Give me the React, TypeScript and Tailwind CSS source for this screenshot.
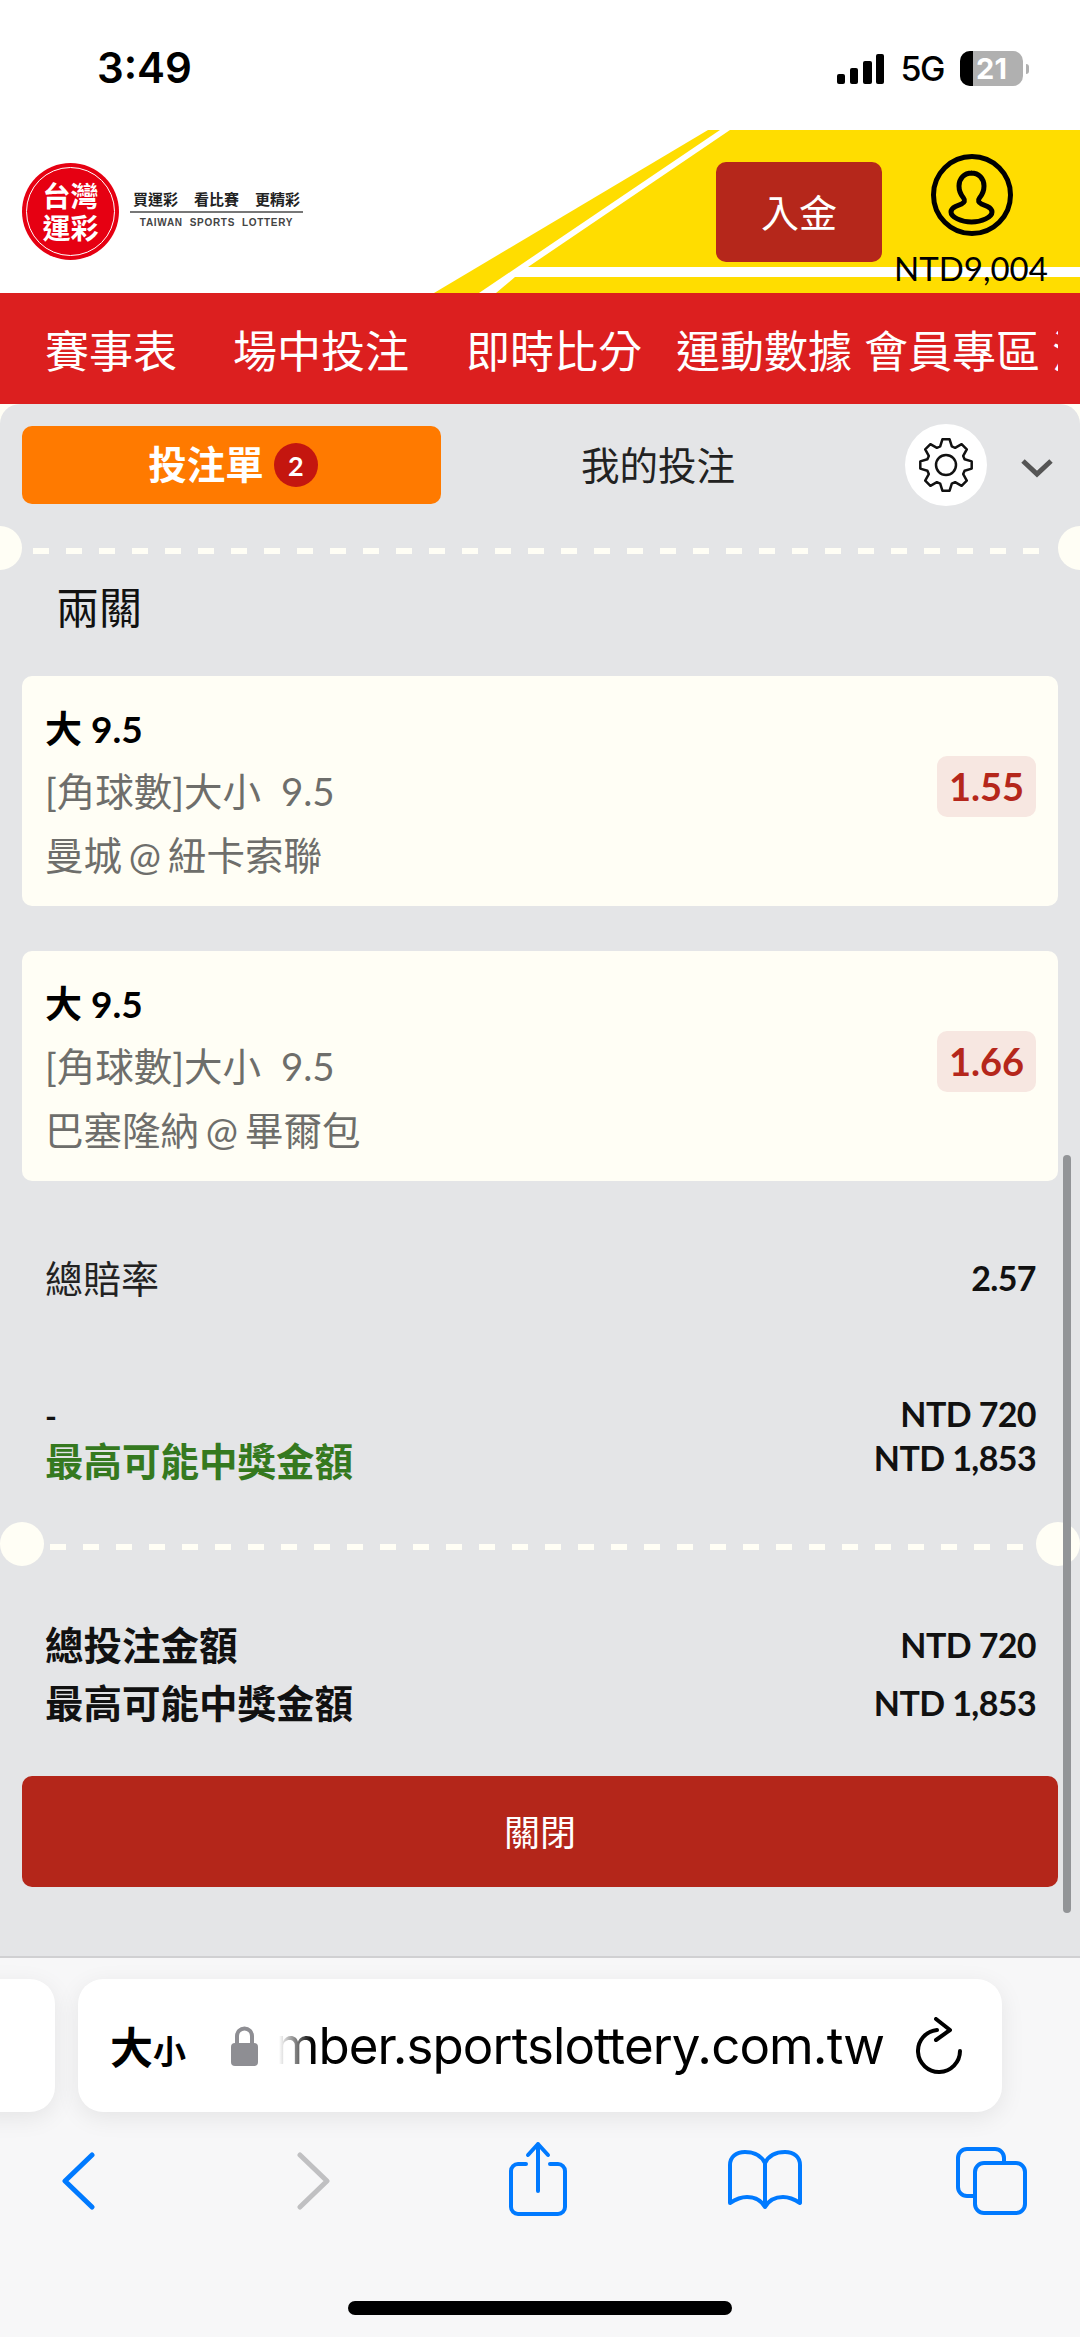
import React from 'react';

const cjk = "font-['Lato','Noto_Sans_CJK_TC',sans-serif]";

const gearPath = (() => {
  const cx = 28;
  const cy = 28;
  const pts: string[] = [];
  for (let i = 0; i < 8; i++) {
    const a = (i * Math.PI) / 4;
    const rows: [number, number][] = [[-0.3, 19.5], [-0.14, 26], [0.14, 26], [0.3, 19.5]];
    rows.forEach(([d, r]) => {
      pts.push(`${(cx + r * Math.sin(a + d)).toFixed(1)},${(cy - r * Math.cos(a + d)).toFixed(1)}`);
    });
  }
  return pts.join(' ');
})();

const StatusBar = () => (
  <div className="flex h-[130px] items-start justify-between bg-white pl-[97px] pr-[51px] pt-[44px]">
    <span className="font-['Inter',sans-serif] text-[42px] font-semibold leading-[48px] text-black">3:49</span>
    <div className="flex items-center pt-[7px]">
      <svg width="47" height="30" viewBox="0 0 47 30" className="mr-[17px]">
        <rect x="0" y="20" width="8" height="10" rx="2" fill="#000" />
        <rect x="13" y="14" width="8" height="16" rx="2" fill="#000" />
        <rect x="26" y="7" width="9" height="23" rx="2" fill="#000" />
        <rect x="39" y="0" width="8" height="30" rx="2" fill="#000" />
      </svg>
      <span className="font-['Inter',sans-serif] text-[34px] font-medium leading-[34px] tracking-[-1.500px] text-black">5G</span>
      <div className="relative ml-[16px] flex h-[35px] w-[63px] items-center justify-center overflow-hidden rounded-[10px] bg-[#b0b0b0]">
        <div className="absolute bottom-0 left-0 top-0 w-[13px] bg-black" />
        <span className="relative font-['Inter',sans-serif] text-[29px] font-bold leading-[35px] text-white">21</span>
      </div>
      <div className="ml-[3px] h-[10px] w-[3px] rounded-r-full bg-[#b0b0b0]" />
    </div>
  </div>
);

const Logo = () => (
  <div className="flex items-center">
    <div className="flex h-[97px] w-[97px] items-center justify-center rounded-full bg-[#e60012]">
      <div className="flex h-[89px] w-[89px] flex-col items-center justify-center rounded-full border border-white font-['Noto_Sans_CJK_TC',sans-serif] text-[28px] font-bold leading-[32px] text-white">
        <span>台灣</span>
        <span>運彩</span>
      </div>
    </div>
    <div className="ml-[11px] mt-[-3px] flex w-[173px] flex-col items-center">
      <div className="flex gap-[16px] whitespace-nowrap font-['Noto_Sans_CJK_TC',sans-serif] text-[15px] font-bold leading-[18px] text-[#222]">
        <span>買運彩</span>
        <span>看比賽</span>
        <span>更精彩</span>
      </div>
      <div className="my-[3px] h-[2px] w-full bg-[#777]" />
      <span className="whitespace-nowrap font-['Liberation_Sans',sans-serif] text-[10px] font-bold leading-[14px] tracking-[0.7px] text-[#444]">TAIWAN&nbsp; SPORTS&nbsp; LOTTERY</span>
    </div>
  </div>
);

const Header = () => (
  <div className="relative flex h-[163px] items-center bg-white pl-[22px]">
    <svg className="absolute inset-0" width="1080" height="163" viewBox="0 0 1080 163">
      <polygon points="708,0 720,0 479,163 434,163" fill="#ffdd00" />
      <polygon points="730,0 1080,0 1080,137 528,137" fill="#ffdd00" />
      <polygon points="515,147 1080,147 1080,163 496,163" fill="#ffdd00" />
    </svg>
    <div className="relative mt-[-1px]">
      <Logo />
    </div>
    <button className={`absolute left-[716px] top-[32px] flex h-[100px] w-[166px] items-center justify-center rounded-[10px] bg-[#b5271b] text-[38px] leading-none text-white ${cjk}`}>
      入金
    </button>
    <svg className="absolute left-[930px] top-[23px]" width="84" height="84" viewBox="0 0 84 84" fill="none" stroke="#000" strokeWidth="5">
      <circle cx="42" cy="42" r="38.5" />
      <path d="M42 20c-8 0-13 5.500-13 13 0 5 2 9 4.500 12 2 2.500 1 4.500-2 6l-6 2.500c-3 1.500-4.500 3.500-4.500 5.500 0 5 10 10 20.500 10s20.500-5 20.500-10c0-2-1.500-4-4.500-5.500l-6-2.500c-3-1.500-4-3.500-2-6 2.500-3 4.500-7 4.500-12 0-7.500-5-13-13-13z" />
    </svg>
    <span className="absolute left-[894px] top-[119px] font-['Lato',sans-serif] text-[33px] leading-[38px] text-black">NTD9,004</span>
  </div>
);

const navItems = [
  { label: '賽事表', margin: 'ml-[45px]' },
  { label: '場中投注', margin: 'ml-[56px]' },
  { label: '即時比分', margin: 'ml-[57px]' },
  { label: '運動數據', margin: 'ml-[34px]' },
  { label: '會員專區', margin: 'ml-[12px]' },
  { label: '活動', margin: 'ml-[12px]' },
];

const Nav = () => (
  <div className="h-[111px] bg-[#dc1f1f]">
    <div className="flex h-full w-[1058px] items-center overflow-hidden whitespace-nowrap">
      {navItems.map((item) => (
        <span key={item.label} className={`${item.margin} shrink-0 font-['Noto_Sans_CJK_TC',sans-serif] text-[44px] leading-none text-white`}>
          {item.label}
        </span>
      ))}
    </div>
  </div>
);

const Separator = ({ big }: { big?: boolean }) => (
  <div className="relative h-[44px]">
    <div className={big ? 'absolute left-0 top-0 h-[44px] w-[44px] rounded-full bg-[#fffef5]' : 'absolute left-[-22px] top-0 h-[44px] w-[44px] rounded-full bg-[#fffef5]'} />
    <div className={big ? 'absolute right-0 top-0 h-[44px] w-[44px] rounded-full bg-[#fffef5]' : 'absolute right-[-22px] top-0 h-[44px] w-[44px] rounded-full bg-[#fffef5]'} />
    <div className={big ? 'absolute left-[50px] right-[50px] top-[22px] h-[6px] bg-[repeating-linear-gradient(90deg,#fffef5_0,#fffef5_16.500px,transparent_16.500px,transparent_33px)]' : 'absolute left-[33px] right-[33px] top-[22px] h-[6px] bg-[repeating-linear-gradient(90deg,#fffef5_0,#fffef5_16.500px,transparent_16.500px,transparent_33px)]'} />
  </div>
);

const BetCard = ({ market, teams, odds, mt }: { market: string; teams: string; odds: string; mt: string }) => (
  <div className={`${mt} mx-[22px] flex h-[230px] items-center justify-between rounded-[10px] bg-[#fffef5] pl-[23px] pr-[22px] ${cjk}`}>
    <div className="flex flex-col">
      <span className="pt-[3px] text-[37px] font-bold leading-[61px] text-black">大 9.5</span>
      <span className="text-[38.500px] leading-[64px] text-[#6e6e6b] [word-spacing:10px]">{market}</span>
      <span className="text-[38.500px] leading-[64px] text-[#6e6e6b] [word-spacing:-3px]">{teams}</span>
    </div>
    <div className="mb-[10px] flex h-[61px] w-[99px] items-center justify-center rounded-[10px] bg-[#f7e7e1] text-[38px] font-bold text-[#b5271b]">{odds}</div>
  </div>
);

const Amount = ({ children }: { children: React.ReactNode }) => (
  <span className="text-[34px] font-bold leading-none tracking-[-0.6px] text-[#111]">{children}</span>
);

const Row = ({ label, value }: { label: string; value: string }) => (
  <div className={`flex h-[58px] items-center justify-between pl-[45px] pr-[44px] ${cjk}`}>
    <span className="text-[38.500px] font-bold leading-none text-[#111]">{label}</span>
    <Amount>{value}</Amount>
  </div>
);

const Panel = () => (
  <div className="bg-[#fffef5]">
    <div className="relative h-[1552px] overflow-hidden rounded-t-[20px] bg-[#e4e5e7]">
      <div className="flex items-center pl-[22px] pt-[20px]">
        <div className={`flex h-[78px] w-[419px] items-center justify-center rounded-[10px] bg-[#ff7a00] pl-[3px] text-[38.500px] font-bold text-white ${cjk}`}>
          投注單
          <span className="ml-[10px] flex h-[44px] w-[44px] items-center justify-center rounded-full bg-[#c4160f] text-[27px] font-bold leading-none">2</span>
        </div>
        <span className={`ml-[140px] text-[38.500px] leading-none text-[#222] ${cjk}`}>我的投注</span>
        <div className="ml-[170px] flex h-[82px] w-[82px] items-center justify-center rounded-full bg-white">
          <svg width="56" height="56" viewBox="0 0 56 56" fill="none" stroke="#111" strokeWidth="2.500" strokeLinejoin="round">
            <polygon points={gearPath} />
            <circle cx="28" cy="28" r="10" />
          </svg>
        </div>
        <svg width="34" height="20" viewBox="0 0 34 20" fill="none" stroke="#555" strokeWidth="5" className="ml-[33px] mt-[5px]">
          <path d="M3 3l14 13L31 3" />
        </svg>
      </div>

      <div className="mt-[20px]">
        <Separator />
      </div>

      <div className={`mt-[10px] pl-[56px] text-[43px] leading-[56px] text-[#111] ${cjk}`}>兩關</div>

      <BetCard mt="mt-[40px]" market="[角球數]大小 9.5" teams="曼城 @ 紐卡索聯" odds="1.55" />
      <BetCard mt="mt-[45px]" market="[角球數]大小 9.5" teams="巴塞隆納 @ 畢爾包" odds="1.66" />

      <div className={`mt-[67px] flex h-[60px] items-center justify-between pl-[45px] pr-[44px] ${cjk}`}>
        <span className="text-[38px] leading-none text-[#222]">總賠率</span>
        <Amount>2.57</Amount>
      </div>

      <div className="mt-[84px] flex flex-col">
        <div className={`flex h-[44px] items-center justify-between pl-[45px] pr-[44px] ${cjk}`}>
          <span className="pt-[4px] text-[32px] font-bold leading-none text-[#111]">-</span>
          <Amount>NTD 720</Amount>
        </div>
        <div className={`flex h-[44px] items-center justify-between pl-[45px] pr-[44px] ${cjk}`}>
          <span className="pt-[6px] text-[38.500px] font-bold leading-none text-[#35791f]">最高可能中獎金額</span>
          <Amount>NTD 1,853</Amount>
        </div>
      </div>

      <div className="mt-[42px]">
        <Separator big />
      </div>

      <div className="mt-[50px]">
        <Row label="總投注金額" value="NTD 720" />
        <Row label="最高可能中獎金額" value="NTD 1,853" />
      </div>

      <button className={`mx-[22px] mt-[44px] flex h-[111px] w-[1036px] items-center justify-center rounded-[10px] bg-[#b4261a] text-[36px] leading-none text-white ${cjk}`}>
        關閉
      </button>

      <div className="absolute bottom-[43px] right-[9px] h-[758px] w-[8px] rounded-full bg-[#929497]" />
    </div>
  </div>
);

const Toolbar = () => (
  <div className="relative h-[381px] overflow-hidden border-t-2 border-[#d0d0d2] bg-[#f7f7f8]">
    <div className="flex h-[133px] gap-[23px] pt-[21px]">
      <div className="ml-[-40px] h-[133px] w-[95px] shrink-0 rounded-[25px] bg-white shadow-[0_6px_24px_rgba(0,0,0,0.08)]" />
      <div className="relative flex h-[133px] w-[924px] shrink-0 items-center overflow-hidden rounded-[25px] bg-white pl-[32px] shadow-[0_6px_24px_rgba(0,0,0,0.08)]">
        <span className="w-[121px] shrink-0 font-['Noto_Sans_CJK_TC',sans-serif] text-[43px] font-bold leading-none text-black">
          大<span className="text-[33px]">小</span>
        </span>
        <svg width="27" height="40" viewBox="0 0 27 40" className="shrink-0">
          <path d="M6 18V10a7.500 7.500 0 0 1 15 0v8" fill="none" stroke="#8e8e93" strokeWidth="4" />
          <rect x="0" y="17" width="27" height="23" rx="4" fill="#8e8e93" />
        </svg>
        <div className="relative ml-[21px] flex w-[605px] shrink-0 justify-end overflow-hidden">
          <span className="shrink-0 whitespace-nowrap font-['Inter',sans-serif] text-[51px] leading-[62px] tracking-[-0.9px] text-black">mber.sportslottery.com.tw</span>
          <div className="absolute bottom-0 left-0 top-0 w-[34px] bg-gradient-to-r from-white to-transparent" />
        </div>
        <svg width="48" height="58" viewBox="0 0 48 58" fill="none" stroke="#000" strokeWidth="4" strokeLinecap="round" strokeLinejoin="round" className="ml-[32px] shrink-0">
          <path d="M21 13A21 21 0 1 0 44 34" />
          <path d="M20 2l14 11-14 10" />
        </svg>
      </div>
    </div>
    <div className="relative mt-[50px] h-[80px]">
      <svg className="absolute left-[60px] top-[11px]" width="36" height="58" viewBox="0 0 36 58" fill="none" stroke="#007aff" strokeWidth="5" strokeLinecap="round" strokeLinejoin="round">
        <path d="M32 3L5 29l27 26" />
      </svg>
      <svg className="absolute left-[295px] top-[11px]" width="36" height="58" viewBox="0 0 36 58" fill="none" stroke="#c0c0c2" strokeWidth="5" strokeLinecap="round" strokeLinejoin="round">
        <path d="M5 3l27 26L5 55" />
      </svg>
      <svg className="absolute left-[508px] top-0" width="60" height="76" viewBox="0 0 60 76" fill="none" stroke="#007aff" strokeWidth="4" strokeLinecap="round" strokeLinejoin="round">
        <path d="M18 23h-8a7 7 0 0 0-7 7v36a7 7 0 0 0 7 7h40a7 7 0 0 0 7-7V30a7 7 0 0 0-7-7h-8" />
        <path d="M30 50V3M20 14L30 3l10 11" />
      </svg>
      <svg className="absolute left-[727px] top-[8px]" width="76" height="62" viewBox="0 0 76 62" fill="none" stroke="#007aff" strokeWidth="4" strokeLinecap="round" strokeLinejoin="round">
        <path d="M38 14C34 6 27 3 18 3 9 3 3 8 3 16v38c6-4 11-6 17-6 8 0 14 3 18 10 4-7 10-10 18-10 6 0 11 2 17 6V16c0-8-6-13-15-13-9 0-16 3-20 11zM38 14v44" />
      </svg>
      <svg className="absolute left-[955px] top-[5px]" width="73" height="70" viewBox="0 0 73 70" fill="none" stroke="#007aff" strokeWidth="4" strokeLinejoin="round">
        <path d="M18 50h-6a9 9 0 0 1-9-9V12a9 9 0 0 1 9-9h28a9 9 0 0 1 9 9v5" />
        <rect x="20" y="17" width="50" height="50" rx="9" />
      </svg>
    </div>
    <div className="absolute left-[348px] top-[343px] h-[14px] w-[384px] rounded-full bg-black" />
  </div>
);

export default function App() {
  return (
    <div className="h-[2337px] w-[1080px] overflow-hidden bg-white">
      <StatusBar />
      <Header />
      <Nav />
      <Panel />
      <Toolbar />
    </div>
  );
}
